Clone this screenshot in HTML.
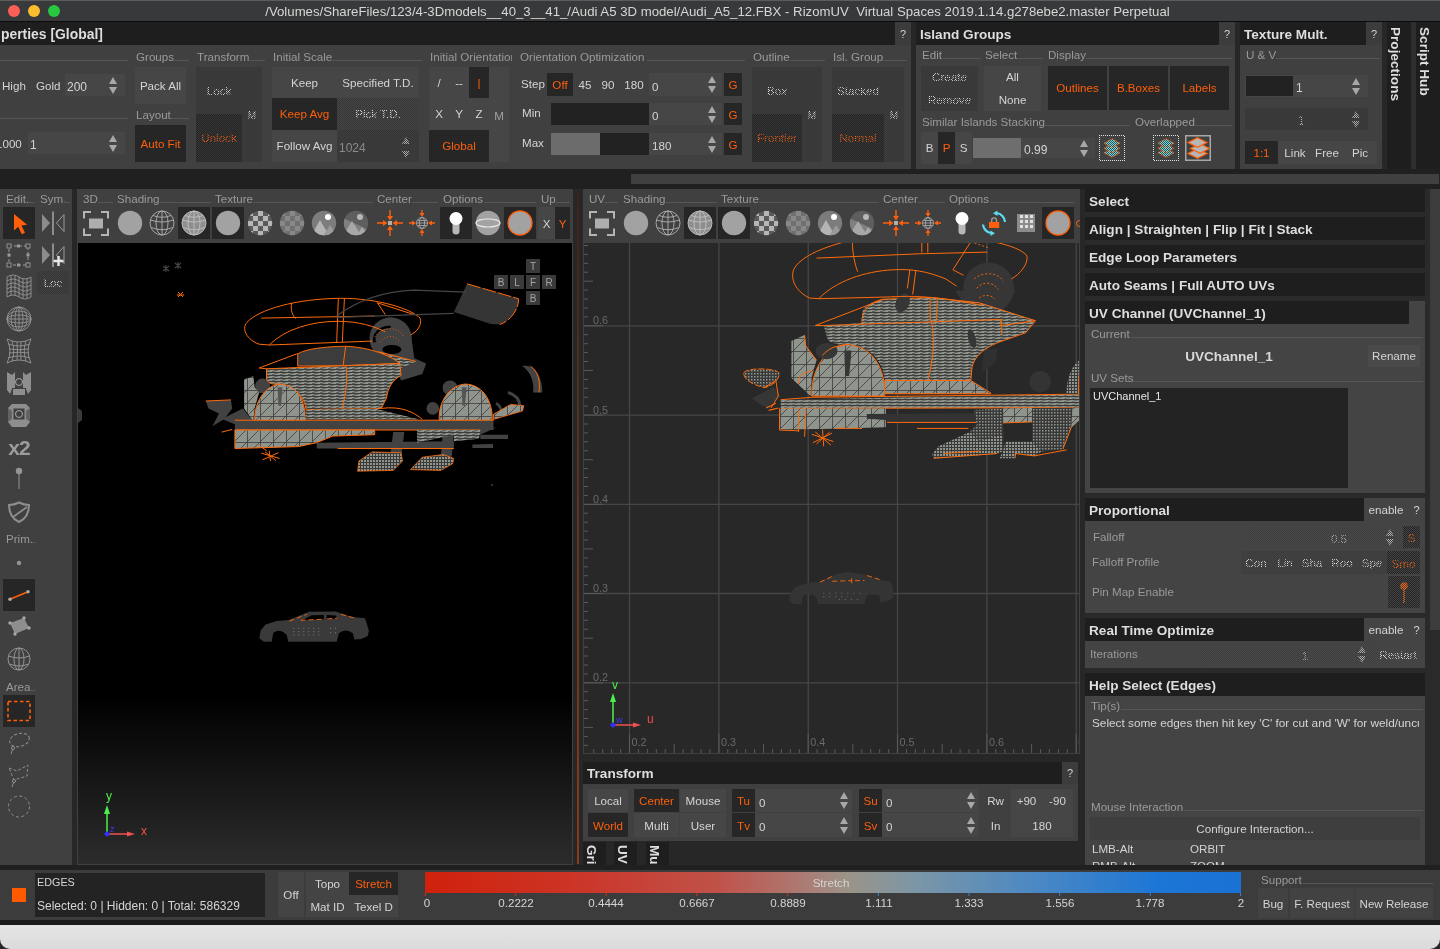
<!DOCTYPE html>
<html>
<head>
<meta charset="utf-8">
<title>RizomUV</title>
<style>
html,body{margin:0;padding:0;}
body{width:1440px;height:949px;overflow:hidden;background:#272727;position:relative;font-family:"Liberation Sans",sans-serif;font-size:11.6px;color:#d4d4d4;}
div,span{box-sizing:border-box;}
.a{position:absolute;}
.c{position:absolute;display:flex;align-items:center;justify-content:center;white-space:nowrap;}
.l{position:absolute;display:flex;align-items:center;justify-content:flex-start;white-space:nowrap;padding-bottom:2px;}
.body{background:#404040;}
.hdr{background:#1e1e1e;color:#dedede;font-weight:bold;font-size:13.6px;display:flex;align-items:center;white-space:nowrap;overflow:hidden;padding-top:1px;}
.q{background:#3c3c3c;color:#d0d0d0;font-size:11px;}
.b{background:#464646;color:#d4d4d4;}
.d{background:#262626;color:#ff5f0a;}
.o{color:#ff5f0a;}
.u{padding-bottom:2px;}
.l.b{padding-top:3px;padding-bottom:0;}
.g{color:#9a9a9a;}
.dis{color:#e4e4e4;-webkit-mask-image:conic-gradient(#000 25%,transparent 0 50%,#000 0 75%,transparent 0);-webkit-mask-size:2px 2px;mask-image:conic-gradient(#000 25%,transparent 0 50%,#000 0 75%,transparent 0);mask-size:2px 2px;}
.hat{background-color:#3d3d3d;background-image:conic-gradient(rgba(0,0,0,.12) 25%,transparent 0 50%,rgba(0,0,0,.12) 0 75%,transparent 0);background-size:2px 2px;}
.hatd{background-color:#242424;color:#ff5f0a;-webkit-mask-image:conic-gradient(#000 25%,transparent 0 50%,#000 0 75%,transparent 0);-webkit-mask-size:2px 2px;mask-image:conic-gradient(#000 25%,transparent 0 50%,#000 0 75%,transparent 0);mask-size:2px 2px;}
.ln{position:absolute;height:1px;background:#565656;}
.sp{position:absolute;width:9px;height:18px;}
.sp:before,.sp:after{content:"";position:absolute;left:0;border-left:4.5px solid transparent;border-right:4.5px solid transparent;}
.sp:before{top:1px;border-bottom:7.5px solid #a8a8a8;}
.sp:after{bottom:0;border-top:7.5px solid #a8a8a8;}
.sp.x{-webkit-mask-image:conic-gradient(#000 25%,transparent 0 50%,#000 0 75%,transparent 0);-webkit-mask-size:2px 2px;mask-image:conic-gradient(#000 25%,transparent 0 50%,#000 0 75%,transparent 0);mask-size:2px 2px;}
.sp.x:before{border-bottom-color:#b0b0b0;}
.sp.x:after{border-top-color:#b0b0b0;}
svg{position:absolute;overflow:visible;}
</style>
</head>
<body>
<div id="root" style="position:absolute;left:0;top:0;width:1440px;height:949px;will-change:transform;">

<!-- ===== title bar ===== -->
<div class="a" style="left:0;top:0;width:1440px;height:22px;background:#38393b;border-top:1px solid #5c5c5c;border-bottom:1px solid #0c0c0c;"></div>
<div class="a" style="left:8px;top:5px;width:12px;height:12px;border-radius:6px;background:#fc5f57;"></div>
<div class="a" style="left:28px;top:5px;width:12px;height:12px;border-radius:6px;background:#fdbc2e;"></div>
<div class="a" style="left:48px;top:5px;width:12px;height:12px;border-radius:6px;background:#28c840;"></div>
<div class="c" id="title" style="left:265px;top:0;width:905px;height:22px;font-size:13.2px;color:#d6d6d6;white-space:pre;">/Volumes/ShareFiles/123/4-3Dmodels__40_3__41_/Audi A5 3D model/Audi_A5_12.FBX - RizomUV  Virtual Spaces 2019.1.14.g278ebe2.master Perpetual</div>

<!-- ===== TOP LEFT PANEL : properties ===== -->
<div class="a hdr" style="left:0;top:22px;width:895px;height:23px;"><span style="margin-left:1px;font-size:13.9px;">perties [Global]</span></div>
<div class="c q" style="left:895px;top:22px;width:16px;height:23px;">?</div>
<div class="a body" style="left:0;top:45px;width:911px;height:124px;"></div>
<!-- left quality rows -->
<div class="ln" style="left:0;top:60px;width:128px;"></div>
<div class="l" style="left:2px;top:75px;height:23px;">High</div>
<div class="l" style="left:36px;top:75px;height:23px;">Gold</div>
<div class="l b" style="left:65px;top:74px;width:60px;height:22px;padding-left:2px;font-size:12px;">200</div>
<div class="sp" style="left:109px;top:76px;"></div>
<div class="ln" style="left:0;top:118px;width:128px;"></div>
<div class="l" style="left:-4px;top:133px;height:23px;">1000</div>
<div class="l b" style="left:28px;top:132px;width:97px;height:22px;padding-left:2px;font-size:12px;">1</div>
<div class="sp" style="left:109px;top:134px;"></div>
<!-- Groups / Layout -->
<div class="l g" style="left:136px;top:50px;height:14px;">Groups</div><div class="ln" style="left:174px;top:60px;width:15px;"></div>
<div class="c b" style="left:135px;top:67px;width:51px;height:37px;">Pack All</div>
<div class="l g" style="left:136px;top:108px;height:14px;">Layout</div><div class="ln" style="left:171px;top:118px;width:18px;"></div>
<div class="c d" style="left:135px;top:125px;width:51px;height:37px;">Auto Fit</div>
<!-- Transform -->
<div class="l g" style="left:197px;top:50px;height:14px;">Transform</div><div class="ln" style="left:250px;top:60px;width:15px;"></div>
<div class="a hat" style="left:196px;top:67px;width:66px;height:95px;"></div>
<div class="c dis u" style="left:196px;top:80px;width:46px;height:22px;">Lock</div>
<div class="c hatd u" style="left:196px;top:114px;width:46px;height:48px;">Unlock</div>
<div class="c dis" style="left:243px;top:108px;width:18px;height:14px;font-size:10px;">M</div>
<!-- Initial Scale -->
<div class="l g" style="left:273px;top:50px;height:14px;">Initial Scale</div><div class="ln" style="left:332px;top:60px;width:90px;"></div>
<div class="a b" style="left:272px;top:67px;width:147px;height:95px;"></div>
<div class="c" style="left:272px;top:67px;width:65px;height:31px;">Keep</div>
<div class="c" style="left:337px;top:67px;width:82px;height:31px;">Specified T.D.</div>
<div class="c d u" style="left:272px;top:98px;width:65px;height:32px;">Keep Avg</div>
<div class="c hat dis u" style="left:337px;top:98px;width:82px;height:32px;">Pick T.D.</div>
<div class="c u" style="left:272px;top:130px;width:65px;height:32px;">Follow Avg</div>
<div class="l hat" style="left:337px;top:130px;width:82px;height:32px;padding-left:2px;color:#8a8a8a;font-size:12px;padding-top:5px;">1024</div>
<div class="sp x" style="left:402px;top:136px;height:22px;"></div>
<!-- Initial Orientation -->
<div class="l g" style="left:430px;top:50px;height:14px;width:82px;overflow:hidden;">Initial Orientation</div>
<div class="a b" style="left:429px;top:67px;width:80px;height:95px;"></div>
<div class="c" style="left:429px;top:67px;width:20px;height:31px;">/</div>
<div class="c" style="left:449px;top:67px;width:20px;height:31px;">--</div>
<div class="c d" style="left:469px;top:67px;width:20px;height:31px;">|</div>
<div class="c u" style="left:429px;top:98px;width:20px;height:32px;">X</div>
<div class="c u" style="left:449px;top:98px;width:20px;height:32px;">Y</div>
<div class="c u" style="left:469px;top:98px;width:20px;height:32px;">Z</div>
<div class="c" style="left:489px;top:99px;width:20px;height:32px;color:#a0a0a0;">M</div>
<div class="c d u" style="left:429px;top:130px;width:60px;height:32px;">Global</div>
<!-- Orientation Optimization -->
<div class="l g" style="left:520px;top:50px;height:14px;">Orientation Optimization</div><div class="ln" style="left:647px;top:60px;width:98px;"></div>
<div class="l" style="left:521px;top:73px;height:23px;">Step</div>
<div class="c d" style="left:547px;top:73px;width:26px;height:23px;">Off</div>
<div class="c" style="left:574px;top:73px;width:22px;height:23px;">45</div>
<div class="c" style="left:597px;top:73px;width:22px;height:23px;">90</div>
<div class="c" style="left:620px;top:73px;width:28px;height:23px;">180</div>
<div class="l b" style="left:649px;top:73px;width:73px;height:23px;padding-left:3px;">0</div>
<div class="sp" style="left:708px;top:75px;"></div>
<div class="c d" style="left:724px;top:73px;width:18px;height:23px;">G</div>
<div class="l" style="left:522px;top:102px;height:23px;">Min</div>
<div class="a" style="left:551px;top:103px;width:98px;height:22px;background:#222;"></div>
<div class="l b" style="left:649px;top:103px;width:73px;height:22px;padding-left:3px;">0</div>
<div class="sp" style="left:708px;top:105px;"></div>
<div class="c d" style="left:724px;top:103px;width:18px;height:22px;">G</div>
<div class="l" style="left:522px;top:132px;height:23px;">Max</div>
<div class="a" style="left:551px;top:133px;width:98px;height:22px;background:#222;"></div>
<div class="a" style="left:551px;top:133px;width:49px;height:22px;background:#6c6c6c;"></div>
<div class="l b" style="left:649px;top:133px;width:73px;height:22px;padding-left:3px;">180</div>
<div class="sp" style="left:708px;top:135px;"></div>
<div class="c d" style="left:724px;top:133px;width:18px;height:22px;">G</div>
<!-- Outline -->
<div class="l g" style="left:753px;top:50px;height:14px;">Outline</div><div class="ln" style="left:790px;top:60px;width:35px;"></div>
<div class="a hat" style="left:752px;top:67px;width:70px;height:95px;"></div>
<div class="c dis u" style="left:752px;top:80px;width:50px;height:22px;">Box</div>
<div class="c hatd u" style="left:752px;top:114px;width:50px;height:48px;">Frontier</div>
<div class="c dis" style="left:803px;top:108px;width:18px;height:14px;font-size:10px;">M</div>
<!-- Isl group -->
<div class="l g" style="left:833px;top:50px;height:14px;">Isl. Group</div><div class="ln" style="left:883px;top:60px;width:24px;"></div>
<div class="a hat" style="left:832px;top:67px;width:72px;height:95px;"></div>
<div class="c dis u" style="left:832px;top:80px;width:52px;height:22px;">Stacked</div>
<div class="c hatd u" style="left:832px;top:114px;width:52px;height:48px;">Normal</div>
<div class="c dis" style="left:885px;top:108px;width:18px;height:14px;font-size:10px;">M</div>
<!-- bottom scrollbar -->
<div class="a" style="left:0;top:169px;width:1440px;height:20px;background:#202020;"></div>
<div class="a" style="left:631px;top:174px;width:808px;height:10px;background:#404040;"></div>
<!--TOPLEFT-->

<!-- ===== ISLAND GROUPS ===== -->
<div class="a hdr" style="left:916px;top:22px;width:303px;height:23px;padding-left:4px;">Island Groups</div>
<div class="c q" style="left:1219px;top:22px;width:16px;height:23px;">?</div>
<div class="a body" style="left:916px;top:45px;width:319px;height:124px;"></div>
<div class="l g" style="left:922px;top:48px;height:14px;">Edit</div><div class="ln" style="left:943px;top:58px;width:38px;"></div>
<div class="l g" style="left:985px;top:48px;height:14px;">Select</div><div class="ln" style="left:1018px;top:58px;width:25px;"></div>
<div class="l g" style="left:1048px;top:48px;height:14px;">Display</div><div class="ln" style="left:1086px;top:58px;width:146px;"></div>
<div class="a hat" style="left:921px;top:66px;width:57px;height:45px;"></div>
<div class="c dis u" style="left:921px;top:66px;width:57px;height:22px;">Create</div>
<div class="c dis u" style="left:921px;top:89px;width:57px;height:22px;">Remove</div>
<div class="a b" style="left:984px;top:66px;width:57px;height:45px;"></div>
<div class="c u" style="left:984px;top:66px;width:57px;height:22px;">All</div>
<div class="c u" style="left:984px;top:89px;width:57px;height:22px;">None</div>
<div class="c d u" style="left:1048px;top:66px;width:59px;height:44px;">Outlines</div>
<div class="c d u" style="left:1109px;top:66px;width:59px;height:44px;">B.Boxes</div>
<div class="c d u" style="left:1170px;top:66px;width:59px;height:44px;">Labels</div>
<div class="l g" style="left:922px;top:115px;height:14px;">Similar Islands Stacking</div><div class="ln" style="left:1045px;top:125px;width:85px;"></div>
<div class="l g" style="left:1135px;top:115px;height:14px;">Overlapped</div><div class="ln" style="left:1195px;top:125px;width:37px;"></div>
<div class="a b" style="left:921px;top:132px;width:51px;height:32px;"></div>
<div class="c u" style="left:921px;top:132px;width:17px;height:32px;">B</div>
<div class="c d u" style="left:938px;top:132px;width:17px;height:32px;">P</div>
<div class="c u" style="left:955px;top:132px;width:17px;height:32px;">S</div>
<div class="a" style="left:973px;top:138px;width:48px;height:20px;background:#6e6e6e;"></div>
<div class="l b" style="left:1021px;top:138px;width:74px;height:20px;padding-left:3px;font-size:12px;padding-top:4px;">0.99</div>
<div class="sp" style="left:1080px;top:139px;"></div>
<!-- stack icons -->
<svg width="0" height="0" style="left:0;top:0;"><defs><pattern id="ckc" width="2" height="2" patternUnits="userSpaceOnUse"><rect width="2" height="2" fill="#66e0ea"/><rect width="1" height="1" fill="#3a4a4c"/><rect x="1" y="1" width="1" height="1" fill="#3a4a4c"/></pattern></defs></svg>
<svg style="left:1099px;top:135px;" width="26" height="26" viewBox="0 0 26 26"><rect x=".5" y=".5" width="25" height="25" fill="none" stroke="#e0e0e0" stroke-width="1" stroke-dasharray="1 1" stroke-dashoffset=".5" shape-rendering="crispEdges"/><path d="M13 13.3 21 17.8 13 22.3 5 17.8Z" fill="url(#ckc)" stroke="#e8601a" stroke-width="1" stroke-dasharray="1.5 .8"/><path d="M13 8.8 21 13.3 13 17.8 5 13.3Z" fill="url(#ckc)" stroke="#e8601a" stroke-width="1" stroke-dasharray="1.5 .8"/><path d="M13 3.6999999999999993 21 8.2 13 12.7 5 8.2Z" fill="url(#ckc)" stroke="#e8601a" stroke-width="1" stroke-dasharray="1.5 .8"/></svg>
<svg style="left:1153px;top:135px;" width="26" height="26" viewBox="0 0 26 26"><rect x=".5" y=".5" width="25" height="25" fill="none" stroke="#e0e0e0" stroke-width="1" stroke-dasharray="1 1" stroke-dashoffset=".5" shape-rendering="crispEdges"/><path d="M13 13.3 21 17.8 13 22.3 5 17.8Z" fill="url(#ckc)" stroke="#e8601a" stroke-width="1" stroke-dasharray="1.5 .8"/><path d="M13 8.8 21 13.3 13 17.8 5 13.3Z" fill="url(#ckc)" stroke="#e8601a" stroke-width="1" stroke-dasharray="1.5 .8"/><path d="M13 3.6999999999999993 21 8.2 13 12.7 5 8.2Z" fill="url(#ckc)" stroke="#e8601a" stroke-width="1" stroke-dasharray="1.5 .8"/></svg>
<svg style="left:1185px;top:135px;" width="26" height="26" viewBox="0 0 26 26"><rect x=".75" y=".75" width="24.500" height="24.500" fill="none" stroke="#a8a8a8" stroke-width="1.500"/><path d="M12.5 13.7 22.0 18.5 12.5 23.3 3.0 18.5Z" fill="#b6b6b6" stroke="#ff5f0a" stroke-width="1.200"/><path d="M15 8.7 24.5 13.5 15 18.3 5.5 13.5Z" fill="#b6b6b6" stroke="#ff5f0a" stroke-width="1.200"/><path d="M12.5 2.7 22.0 7.5 12.5 12.3 3.0 7.5Z" fill="#b6b6b6" stroke="#ff5f0a" stroke-width="1.200"/></svg>
<!--ISLAND-->

<!-- ===== TEXTURE MULT ===== -->
<div class="a hdr" style="left:1240px;top:22px;width:126px;height:23px;padding-left:4px;">Texture Mult.</div>
<div class="c q" style="left:1366px;top:22px;width:16px;height:23px;">?</div>
<div class="a body" style="left:1240px;top:45px;width:142px;height:124px;"></div>
<div class="l g" style="left:1246px;top:48px;height:14px;">U &amp; V</div><div class="ln" style="left:1276px;top:58px;width:104px;"></div>
<div class="a b" style="left:1245px;top:75px;width:123px;height:22px;"></div>
<div class="a" style="left:1246px;top:76px;width:47px;height:20px;background:#222;"></div>
<div class="l" style="left:1296px;top:78px;height:22px;font-size:12px;">1</div>
<div class="sp" style="left:1352px;top:77px;"></div>
<div class="a hat" style="left:1245px;top:108px;width:123px;height:22px;"></div>
<div class="l dis" style="left:1298px;top:111px;height:22px;font-size:12px;color:#b4b4b4;">1</div>
<div class="sp x" style="left:1352px;top:110px;"></div>
<div class="a b" style="left:1245px;top:141px;width:132px;height:23px;"></div>
<div class="c d" style="left:1245px;top:141px;width:33px;height:23px;">1:1</div>
<div class="c" style="left:1278px;top:141px;width:34px;height:23px;">Link</div>
<div class="c" style="left:1311px;top:141px;width:32px;height:23px;">Free</div>
<div class="c" style="left:1343px;top:141px;width:34px;height:23px;">Pic</div>
<!-- vertical tabs -->
<div class="a" style="left:1411px;top:22px;width:5px;height:147px;background:#2e2e2e;"></div>
<div class="a" style="left:1387px;top:22px;width:24px;height:147px;background:#1e1e1e;"></div>
<div class="a" style="left:1416px;top:22px;width:24px;height:147px;background:#1e1e1e;"></div>
<div class="a" style="left:1407px;top:27px;width:0;height:0;"><div style="position:absolute;left:0;top:0;transform-origin:0 0;transform:rotate(90deg);font-weight:bold;font-size:13.6px;white-space:nowrap;line-height:24px;height:24px;color:#dedede;">Projections</div></div>
<div class="a" style="left:1436px;top:27px;width:0;height:0;"><div style="position:absolute;left:0;top:0;transform-origin:0 0;transform:rotate(90deg);font-weight:bold;font-size:13.6px;white-space:nowrap;line-height:24px;height:24px;color:#dedede;">Script Hub</div></div>
<!--TEXMULT-->

<!-- ===== LEFT TOOLBAR ===== -->
<div class="a body" style="left:0;top:189px;width:72px;height:676px;"></div>
<div class="l g" style="left:6px;top:192px;height:14px;">Edit.</div><div class="ln" style="left:28px;top:202px;width:6px;"></div>
<div class="l g" style="left:40px;top:192px;height:14px;">Sym.</div><div class="ln" style="left:64px;top:202px;width:6px;"></div>
<div class="a" style="left:3px;top:207px;width:32px;height:32px;background:#262626;"></div>
<div class="a" style="left:3px;top:579px;width:32px;height:32px;background:#262626;"></div>
<div class="a" style="left:3px;top:695px;width:32px;height:32px;background:#262626;"></div>
<div class="c hat dis" style="left:37px;top:271px;width:32px;height:23px;">Loc</div>
<div class="c" style="left:3px;top:434px;width:32px;height:28px;font-weight:bold;font-size:21px;color:#9c9c9c;letter-spacing:-1px;">x2</div>
<div class="l g" style="left:6px;top:532px;height:14px;">Prim.</div><div class="ln" style="left:32px;top:542px;width:4px;"></div>
<div class="l g" style="left:6px;top:680px;height:14px;">Area</div><div class="ln" style="left:31px;top:690px;width:5px;"></div>
<svg style="left:0;top:189px;" width="72" height="676" viewBox="0 189 72 676">
<!-- select arrow -->
<path d="M14 214V230.500L18.200 226.800 21.800 234.200 25 232.700 21.400 225.400 27.200 224.800Z" fill="#ff5f0a"/>
<!-- symmetry 1 -->
<path d="M42 214 50 223 42 232Z" fill="#8c8c8c"/><path d="M53 211.500V235" stroke="#a0a0a0" stroke-width="1.600"/><path d="M64 214.500 56.500 223 64 231.500Z" fill="none" stroke="#9a9a9a" stroke-width="1"/>
<!-- symmetry 2 -->
<path d="M42 246 50 255 42 264Z" fill="#8c8c8c"/><path d="M53 243.500V267" stroke="#a0a0a0" stroke-width="1.600"/><path d="M64 246.500 56.500 255 64 263.500Z" fill="none" stroke="#9a9a9a" stroke-width="1"/><path d="M58.500 256V266M53.500 261H63.500" stroke="#e8e8e8" stroke-width="2.400"/>
<!-- box select -->
<rect x="9" y="246" width="19" height="19" fill="none" stroke="#9a9a9a" stroke-width="1" stroke-dasharray="3 2"/><g fill="#3c3c3c" stroke="#9a9a9a" stroke-width=".9"><rect x="7" y="244" width="4" height="4"/><rect x="26" y="244" width="4" height="4"/><rect x="7" y="263" width="4" height="4"/><rect x="26" y="263" width="4" height="4"/></g><g fill="#9a9a9a"><rect x="17" y="244.500" width="3" height="3"/><rect x="17" y="263.500" width="3" height="3"/><rect x="7.500" y="253.500" width="3" height="3"/><rect x="26.500" y="253.500" width="3" height="3"/></g>
<!-- wave grid -->
<g fill="none" stroke="#949494" stroke-width=".9"><path d="M7 277Q13 273 19 277T31 277M7 281Q13 277 19 281T31 281M7 285Q13 281 19 285T31 285M7 289Q13 285 19 289T31 289M7 293Q13 289 19 293T31 293M7 297Q13 293 19 297T31 297M7 277V297M11 275.500V295.500M15 275.500V295.500M19 277V297M23 278.500V298.500M27 278.500V298.500M31 277V297"/></g>
<!-- sphere grid -->
<g fill="none" stroke="#949494" stroke-width=".9"><circle cx="19" cy="319" r="12"/><ellipse cx="19" cy="319" rx="8" ry="12"/><ellipse cx="19" cy="319" rx="4" ry="12"/><ellipse cx="19" cy="319" rx="12" ry="8"/><ellipse cx="19" cy="319" rx="12" ry="4"/><path d="M19 307V331M7 319H31"/></g>
<!-- pinch grid -->
<g fill="none" stroke="#949494" stroke-width=".9"><path d="M7 339Q19 345 31 339M8 344Q19 348 30 344M9 349Q19 350.500 29 349M9 353Q19 351.500 29 353M8 358Q19 354 30 358M7 363Q19 357 31 363M7 339Q13 351 7 363M12 341Q15.500 351 12 361M17 342Q17.800 351 17 360M21 342Q20.200 351 21 360M26 341Q22.500 351 26 361M31 339Q25 351 31 363"/></g>
<!-- unfold -->
<g fill="#8e8e8e"><path d="M7 372 12 375V389L10 394 7 390ZM31 372 26 375V389L28 394 31 390ZM13 389H25V395H13Z"/><path d="M13 376h12v11h-12z" fill="none"/></g><circle cx="19" cy="382" r="3.500" fill="none" stroke="#a8a8a8" stroke-width="1"/><path d="M12 375 15 372V388H12ZM26 375 23 372V388H26Z" fill="#8e8e8e"/>
<!-- optimize -->
<g fill="#8e8e8e"><path d="M12 404H26L30 408V422L26 427H12L8 422V408Z"/></g><rect x="13.500" y="408.500" width="11" height="11" fill="#404040"/><circle cx="19" cy="414" r="3.500" fill="none" stroke="#a8a8a8" stroke-width="1"/><path d="M8 408 12 411V419L8 422ZM30 408 26 411V419L30 422Z" fill="#404040" opacity=".55"/>
<!-- pin -->
<circle cx="19" cy="471" r="3.200" fill="#949494"/><path d="M19 474V489" stroke="#949494" stroke-width="1"/>
<!-- shield -->
<path d="M19 502.500C22 504 26 505 29 505C29 513 25.500 519 19 522C12.500 519 9 513 9 505C12 505 16 504 19 502.500Z" fill="none" stroke="#8e8e8e" stroke-width="2"/><path d="M27 507 13 517" stroke="#8e8e8e" stroke-width="1.600"/>
<!-- dot -->
<circle cx="19" cy="563" r="2.200" fill="#949494"/>
<!-- edge -->
<path d="M10.500 599 27.500 592" stroke="#ff5f0a" stroke-width="1.800"/><circle cx="10" cy="599.200" r="1.800" fill="#aaa"/><circle cx="28" cy="591.800" r="1.800" fill="#aaa"/>
<!-- polygon -->
<path d="M10 623 24 618 29 628 15 634Z" fill="#8e8e8e"/><g fill="#a8a8a8"><circle cx="10" cy="623" r="1.700"/><circle cx="24" cy="618" r="1.700"/><circle cx="29" cy="628" r="1.700"/><circle cx="15" cy="634" r="1.700"/></g>
<!-- globe -->
<g fill="none" stroke="#949494" stroke-width="1"><circle cx="19" cy="659" r="11"/><ellipse cx="19" cy="659" rx="5" ry="11"/><path d="M19 648V670M8.500 656Q19 660 29.500 656M9.500 664Q19 668 28.500 664"/></g>
<!-- area rect -->
<rect x="8" y="701.500" width="22" height="19" fill="none" stroke="#ff5f0a" stroke-width="1.600" stroke-dasharray="3.500 2.500"/>
<!-- lasso -->
<ellipse cx="19.500" cy="740" rx="10" ry="6.500" fill="none" stroke="#8e8e8e" stroke-width="1" stroke-dasharray="3 2" transform="rotate(-15 19.500 740)"/><circle cx="13" cy="748" r="1.600" fill="none" stroke="#8e8e8e"/><path d="M12.500 749.500 11 754" stroke="#8e8e8e"/>
<!-- poly lasso -->
<path d="M9 768 17 771 28 765 27 776 14 780Z" fill="none" stroke="#8e8e8e" stroke-width="1" stroke-dasharray="3 2"/><circle cx="14" cy="781" r="1.600" fill="none" stroke="#8e8e8e"/><path d="M13.500 782.500 12 787" stroke="#8e8e8e"/>
<!-- circle -->
<circle cx="19" cy="806.500" r="10.500" fill="none" stroke="#8e8e8e" stroke-width="1" stroke-dasharray="3 2.500"/>
</svg>
<!--LEFTBAR-->

<!--VIEW3D-BEGIN-->
<svg width="0" height="0" style="left:0;top:0;"><defs>
<pattern id="mS" width="13" height="13" patternUnits="userSpaceOnUse"><rect width="13" height="13" fill="#8f958c"/><path d="M0 .5H13M.5 0V13M0 13 13 0" stroke="#3c3c3c" stroke-width=".8" fill="none"/></pattern>
<pattern id="mD" width="8" height="3" patternUnits="userSpaceOnUse"><rect width="8" height="3" fill="#8f958c"/><path d="M0 .5H8" stroke="#333" stroke-width=".9" fill="none"/><path d="M0 3 8 0" stroke="#333" stroke-width=".7" fill="none"/></pattern>
<pattern id="mX" width="3" height="3" patternUnits="userSpaceOnUse"><rect width="3" height="3" fill="#3a3a3a"/><rect x="1" y="1" width="2" height="2" fill="#8f958c"/></pattern>
<pattern id="mXX" width="3" height="3" patternUnits="userSpaceOnUse"><rect width="3" height="3" fill="#383838"/><rect x="1" y="1" width="1.500" height="1.500" fill="#8f958c"/></pattern>
<pattern id="mH" width="8" height="3" patternUnits="userSpaceOnUse"><rect width="8" height="3" fill="#8f958c"/><path d="M0 .5H8" stroke="#3a3a3a" stroke-width="1.100"/><path d="M0 3 8 0" stroke="#3a3a3a" stroke-width=".5"/></pattern>
</defs></svg>
<!-- ===== 3D VIEW ===== -->
<div class="a body" style="left:77px;top:189px;width:496px;height:676px;"></div>
<div class="a" style="left:78px;top:243px;width:494px;height:621px;background:linear-gradient(#000 0,#000 73%,#2c2c2c 100%);"></div>
<div class="l g" style="left:83px;top:192px;height:14px;">3D</div><div class="ln" style="left:98px;top:202px;width:15px;"></div>
<div class="l g" style="left:117px;top:192px;height:14px;">Shading</div><div class="ln" style="left:160px;top:202px;width:51px;"></div>
<div class="l g" style="left:215px;top:192px;height:14px;">Texture</div><div class="ln" style="left:253px;top:202px;width:120px;"></div>
<div class="l g" style="left:377px;top:192px;height:14px;">Center</div><div class="ln" style="left:412px;top:202px;width:26px;"></div>
<div class="l g" style="left:443px;top:192px;height:14px;">Options</div><div class="ln" style="left:484px;top:202px;width:52px;"></div>
<div class="l g" style="left:541px;top:192px;height:14px;">Up</div><div class="ln" style="left:556px;top:202px;width:14px;"></div>
<svg style="left:83px;top:210px;" width="26" height="26" viewBox="0 0 26 26"><path d="M1 8.500V2H8M18 2H25V8.500M25 18.500V25H18M8 25H1V18.500" fill="none" stroke="#b4b4b4" stroke-width="2"/><rect x="6" y="8.500" width="14" height="10" fill="#aeaeae"/></svg>
<svg style="left:117px;top:210px;" width="26" height="26" viewBox="0 0 26 26"><circle cx="13" cy="13" r="12.2" fill="#a2a2a2"/></svg>
<svg style="left:149px;top:210px;" width="26" height="26" viewBox="0 0 26 26"><g fill="none" stroke="#b0b0b0" stroke-width=".9"><circle cx="13" cy="13" r="12"/><ellipse cx="13" cy="13" rx="6" ry="12"/><path d="M13 1V25M1.500 10Q13 14 24.500 10M2.500 17.500Q13 22 23.500 17.500M4 5.500Q13 9 22 5.500"/></g></svg>
<div class="a" style="left:178px;top:207px;width:32px;height:32px;background:#262626;"></div>
<svg style="left:181px;top:210px;" width="26" height="26" viewBox="0 0 26 26"><circle cx="13" cy="13" r="12" fill="#8e8e8e"/><g fill="none" stroke="#c0c0c0" stroke-width=".9"><circle cx="13" cy="13" r="12"/><ellipse cx="13" cy="13" rx="6" ry="12"/><path d="M13 1V25M1.500 10Q13 14 24.500 10M2.500 17.500Q13 22 23.500 17.500M4 5.500Q13 9 22 5.500"/></g></svg>
<div class="a" style="left:212px;top:207px;width:32px;height:32px;background:#262626;"></div>
<svg style="left:215px;top:210px;" width="26" height="26" viewBox="0 0 26 26"><circle cx="13" cy="13" r="12.2" fill="#a2a2a2"/></svg>
<svg style="left:247px;top:210px;" width="26" height="26" viewBox="0 0 26 26"><clipPath id="cka"><circle cx="13" cy="13" r="12.2"/></clipPath><g clip-path="url(#cka)"><rect width="26" height="26" fill="#5a5a5a"/><path d="M1 1h5v5h-5zM11 1h5v5h-5zM21 1h5v5h-5zM6 6h5v5h-5zM16 6h5v5h-5zM1 11h5v5h-5zM11 11h5v5h-5zM21 11h5v5h-5zM6 16h5v5h-5zM16 16h5v5h-5zM1 21h5v5h-5zM11 21h5v5h-5zM21 21h5v5h-5z" fill="#b6b6b6"/></g></svg>
<svg style="left:279px;top:210px;" width="26" height="26" viewBox="0 0 26 26"><clipPath id="cda"><circle cx="13" cy="13" r="12.2"/></clipPath><g clip-path="url(#cda)"><rect width="26" height="26" fill="#707070"/><path d="M1 1h5v5h-5zM11 1h5v5h-5zM21 1h5v5h-5zM6 6h5v5h-5zM16 6h5v5h-5zM1 11h5v5h-5zM11 11h5v5h-5zM21 11h5v5h-5zM6 16h5v5h-5zM16 16h5v5h-5zM1 21h5v5h-5zM11 21h5v5h-5zM21 21h5v5h-5z" fill="#888"/></g></svg>
<svg style="left:311px;top:210px;" width="26" height="26" viewBox="0 0 26 26"><clipPath id="m1a"><circle cx="13" cy="13" r="12.2"/></clipPath><g clip-path="url(#m1a)"><rect width="26" height="26" fill="#7c7c7c"/><path d="M0 26 9 10 16 22 19 17 26 26Z" fill="#b4b4b4"/><path d="M12 26 19 15 27 26Z" fill="#9a9a9a"/><circle cx="17" cy="7" r="3" fill="#fff"/></g></svg>
<svg style="left:343px;top:210px;" width="26" height="26" viewBox="0 0 26 26"><clipPath id="m2a"><circle cx="13" cy="13" r="12.2"/></clipPath><g clip-path="url(#m2a)"><rect width="26" height="26" fill="#5e5e5e"/><path d="M0 8 26 20V26H0Z" fill="#808080"/><path d="M0 26 9 11 16 22 19 17 26 26Z" fill="#a8a8a8"/><circle cx="17" cy="7" r="3" fill="#b8b8b8"/></g></svg>
<svg style="left:377px;top:210px;" width="26" height="26" viewBox="0 0 26 26"><g stroke="#ff5f0a" stroke-width="1.4" fill="#ff5f0a"><path d="M13 0V9M13 26V17M0 13H9M26 13H17" fill="none"/><path d="M13 10.500 10 6H16ZM13 15.500 10 20H16ZM10.500 13 6 10V16ZM15.500 13 20 10V16Z" stroke="none"/></g><rect x="11" y="11" width="4" height="4" fill="#b0b0b0"/></svg>
<svg style="left:409px;top:210px;" width="26" height="26" viewBox="0 0 26 26"><g stroke="#ff5f0a" stroke-width="1.3" fill="#ff5f0a"><path d="M13 0V5M13 26V21M0 13H5M26 13H21" fill="none"/><path d="M13 7 10.500 3H15.500ZM13 19 10.500 23H15.500ZM7 13 3 10.500V15.500ZM19 13 23 10.500V15.500Z" stroke="none"/></g><g fill="none" stroke="#b0b0b0" stroke-width=".8"><circle cx="13" cy="13" r="5.500"/><ellipse cx="13" cy="13" rx="2.600" ry="5.500"/><path d="M7.500 13H18.500M8.500 10.500H17.500M8.500 15.500H17.500"/></g></svg>
<div class="a" style="left:440px;top:207px;width:32px;height:32px;background:#262626;"></div>
<svg style="left:443px;top:210px;" width="26" height="26" viewBox="0 0 26 26"><path d="M9.500 12h7v9a3.500 3.500 0 0 1-7 0z" fill="#b8b8b8"/><circle cx="13" cy="8.500" r="6.500" fill="#fff"/><circle cx="15.500" cy="11" r="4" fill="#c4c4c4" opacity=".0"/></svg>
<svg style="left:475px;top:210px;" width="26" height="26" viewBox="0 0 26 26"><circle cx="13" cy="13" r="12.200" fill="#a2a2a2"/><ellipse cx="13" cy="13" rx="12" ry="4" fill="none" stroke="#e8e8e8" stroke-width="1.200"/></svg>
<div class="a" style="left:504px;top:207px;width:32px;height:32px;background:#262626;"></div>
<svg style="left:507px;top:210px;" width="26" height="26" viewBox="0 0 26 26"><circle cx="13" cy="13" r="12" fill="#a2a2a2" stroke="#ff5f0a" stroke-width="1.300"/></svg>
<div class="c b" style="left:538px;top:207px;width:17px;height:32px;">X</div><div class="c d" style="left:555px;top:207px;width:15px;height:32px;">Y</div>
<div class="c" style="left:526px;top:259px;width:14px;height:14px;background:#3a3a3a;color:#a4a4a4;font-size:10px;">T</div><div class="c" style="left:494px;top:275px;width:14px;height:14px;background:#3a3a3a;color:#a4a4a4;font-size:10px;">B</div><div class="c" style="left:510px;top:275px;width:14px;height:14px;background:#3a3a3a;color:#a4a4a4;font-size:10px;">L</div><div class="c" style="left:526px;top:275px;width:14px;height:14px;background:#3a3a3a;color:#a4a4a4;font-size:10px;">F</div><div class="c" style="left:542px;top:275px;width:14px;height:14px;background:#3a3a3a;color:#a4a4a4;font-size:10px;">R</div><div class="c" style="left:526px;top:291px;width:14px;height:14px;background:#3a3a3a;color:#a4a4a4;font-size:10px;">B</div>
<svg style="left:0;top:0;" width="1440" height="949" viewBox="0 0 1440 949">
<path d="M467.1 283.8L518.6 298.8C518.6 310.7 509.3 321.3 500.1 324.4L490.9 323.9L453.9 312Z" fill="#353535" stroke="none" stroke-width="1" />
<circle cx="390.6" cy="338.4" r="21.1" fill="#424242"/>
<path d="M372.1 350.3L411.7 339.7L414.3 358.2L426.2 363.5L422.3 374L401.1 380.6L393.2 363.5Z" fill="#424242" stroke="none" stroke-width="1" />
<ellipse cx="391.9" cy="349.5" rx="9.5" ry="4.5" fill="#000"/>
<path d="M205.8 401L230.9 399.9L232.2 408.4L224.3 418.9L212.4 426.3L219 413.6L208.5 408.4Z" fill="#424242" stroke="none" stroke-width="1" />
<path d="M221.7 418.9L242.8 408.4L253.3 421.5L234.9 424.2Z" fill="#424242" stroke="none" stroke-width="1" />
<circle cx="262.6" cy="385.9" r="7.4" fill="#424242"/>
<circle cx="432.8" cy="408.4" r="6.3" fill="#424242"/>
<circle cx="450.0" cy="387.8" r="7.4" fill="#424242"/>
<path d="M522 366.1C533.1 363.5 542.3 374 542.3 392.5L533.1 392.5C534.4 382 530.5 371.4 522 366.1Z" fill="#424242" stroke="none" stroke-width="1" />
<path d="M508 392.5C515.2 394.6 519.4 399.1 519.9 406.2" fill="none" stroke="#424242" stroke-width="3" />
<path d="M496.1 403.1C500.1 405.7 501.4 408.4 500.9 411.5" fill="none" stroke="#424242" stroke-width="2.5" />
<path d="M480.3 434.7L508 434.7L508 439L480.3 439ZM472.4 444.5L493 444L493 447.9L472.4 447.9ZM453.9 432.1L496.1 427.4L480.3 434.7L453.9 441.3Z" fill="#424242" stroke="none" stroke-width="1" />
<path d="M393.2 432.1L404.3 432.1L401.7 453.7L390.6 453.7ZM442.8 432.1L453.9 432.1L451.8 456.4L440.7 459Z" fill="#424242" stroke="none" stroke-width="1" />
<path d="M377.9 351.6L415.7 361.4L401.1 368L398.5 363.5Z" fill="url(#mD)" stroke="none" stroke-width="1" />
<path d="M377.9 351.6L415.7 361.4" fill="none" stroke="#ff6a0a" stroke-width="1" />
<path d="M374.7 342.4C372.1 334.5 380 326.5 390.6 327.1" fill="none" stroke="#000" stroke-width="2.5" />
<path d="M297.7 354.2C303.5 349 327.2 346.3 345.7 346.3C369.5 347.1 390.6 355.6 399.8 363.5L345.7 365.6L297.7 366.1Z" fill="#3c3c3c" stroke="#ff6a0a" stroke-width="1" />
<path d="M266.5 368.8L399.8 363.5L401.1 375.4C393.2 379.3 387.9 387.2 386.6 397.8L381.3 408.4L306.1 409.7C304.8 397.8 295.6 387.2 279.7 384.1C274.5 384.1 269.2 385.1 266.5 379.3Z" fill="url(#mD)" stroke="#ff6a0a" stroke-width="1" />
<path d="M244.1 379.3L253.3 376.2L254.7 387.2L259.1 392.5L254.7 408.4L253.3 421.5L244.1 408.4Z" fill="url(#mS)" stroke="none" stroke-width="1" />
<path d="M254.7 422.9C253.3 397.8 269.2 384.6 279.7 384.1C295.6 384.6 306.1 397.8 305.3 422.9Z" fill="url(#mS)" stroke="#ff6a0a" stroke-width="1" />
<path d="M439.4 422.9C436.8 397.8 453.9 384.1 465.8 384.1C480.3 384.6 493.5 397.8 492.2 422.9Z" fill="url(#mS)" stroke="#ff6a0a" stroke-width="1" />
<path d="M277.6 387.2L282.4 387.2L281.1 405.7L278.4 405.7ZM461.8 387.2L466.6 387.2L465 405.7L462.4 405.7Z" fill="#555" stroke="none" stroke-width="1" />
<path d="M305.3 409.7L374.7 408.4L419.6 419.4L305.3 419.4Z" fill="url(#mD)" stroke="none" stroke-width="1" />
<path d="M381.3 408.4C401.1 405.7 414.3 412.3 422.3 419.4" fill="none" stroke="#ff6a0a" stroke-width="1" />
<path d="M234.9 420.2L493.5 420.2L493.5 430L234.9 430Z" fill="#424242" stroke="none" stroke-width="1" />
<path d="M234.9 420.2L493.5 420.2M234.9 430L480.3 430" fill="none" stroke="#ff6a0a" stroke-width="1" />
<path d="M234.9 430L374.7 430L374.7 434.7L332.5 436.1L316.7 442.7L298.2 446.6L234.9 448.5Z" fill="url(#mS)" stroke="#ff6a0a" stroke-width="1" />
<path d="M316.7 442.7L453.9 441.3L453.9 448.5L316.7 448.5Z" fill="#424242" stroke="none" stroke-width="1" />
<path d="M337.8 448.5L453.9 448.5" fill="none" stroke="#ff6a0a" stroke-width="1" />
<path d="M417 430L480.3 430L479 438.7L453.9 441.3L453.9 434.7L417 442.7Z" fill="url(#mD)" stroke="none" stroke-width="1" />
<path d="M493.5 414.2L510.7 404.4L523.9 405.7L522.5 411L493.5 419.4Z" fill="url(#mS)" stroke="#ff6a0a" stroke-width="0.8" />
<path d="M358.9 461.1L372.1 451.9L401.1 452.7L402.5 461.1L393.2 470.4L357.6 471.2Z" fill="url(#mX)" stroke="#ff6a0a" stroke-width="0.8" />
<path d="M410.4 469.6L422.3 457.2L443.4 454.5L453.9 458.5L452.6 463.8L440.7 470.4Z" fill="url(#mX)" stroke="#ff6a0a" stroke-width="0.8" />
<path d="M259.1 344.2C246.7 339.7 241.5 329.2 246.7 322.6C258.6 309.4 295.6 298.8 340.4 298.3C380 298.3 411.7 309.4 420.1 318.1C422.3 325.2 417 331.8 410.4 335" fill="none" stroke="#ff6a0a" stroke-width="1" />
<path d="M269.2 345C285 329.2 311.4 321.3 337.8 321.3C358.9 321.3 374.7 326.5 385.3 331.8" fill="none" stroke="#ff6a0a" stroke-width="1" />
<path d="M259.1 344.2L269.2 345L372.1 341.1M261.3 318.1L374.7 316M338.3 298.8L336.7 342.9M344.4 298.8L342.3 342.4M291.6 302.8C290.3 310.7 292.9 316 295.6 318.6M377.4 302.8L414.3 314.7M377.4 302.8L385.3 314.7M259.1 368L297.7 353.5M259.1 368L266.5 368.8M345.7 346.3L343.1 365.6M345.7 366.1C348.4 376.7 345.7 392.5 342.5 408.4" fill="none" stroke="#ff6a0a" stroke-width="1" />
<path d="M336.5 316C361.5 297.5 390.6 290.9 414.3 290.1L465.8 292.2M336.5 317.3L453.9 313.3" fill="none" stroke="#454545" stroke-width="1.3" />
<path d="M467.1 283.8L518.6 298.8C518.6 310.7 509.3 321.3 500.1 324.4" fill="none" stroke="#ff6a0a" stroke-width="1" stroke-dasharray="14 2"/>
<path d="M374.7 337.1C380 326.5 398.5 325.2 403.8 337.1M380 342.4C385.3 334.5 395.9 334.5 399.8 342.4" fill="none" stroke="#ff6a0a" stroke-width="0.8" stroke-dasharray="1 2"/>
<path d="M530.5 366.1C538.4 371.4 540.5 382 538.9 392.5" fill="none" stroke="#ff6a0a" stroke-width="1" />
<path d="M261.3 453.2L279.7 458.5M262.6 459.8L278.4 452.7M269.2 450.6L270.5 461.1M265.2 451.9L275.8 460.6M259.1 445.3L266.5 450.6" fill="none" stroke="#ff6a0a" stroke-width="1" />
<path d="M205.8 401L230.9 399.9M221.7 432.1L232.2 429.5" fill="none" stroke="#ff6a0a" stroke-width="1" />
<path d="M259.4 638.3L260.6 630.6L265.6 624.4L276.7 621.1L288.9 620L308.9 611.7L335.6 611.4L351.1 616.7L365 618.3L368.9 630.6L367.8 636.1L361.1 638.9L354.4 639.4L352.8 633.3Q345.6 627.8 338.9 633.3L336.7 641.7L288.3 641.7L286.7 635Q280 627.8 273.3 632.8L271.7 641.7L263.9 641.7Z" fill="#3a3a3a" stroke="none" stroke-width="1" />
<path d="M302.2 620.3L311.7 615.2L323.9 615L323.9 619.2ZM326.7 615L335.6 615.6L337.8 618.6L326.7 619.2Z" fill="#000" stroke="none" stroke-width="1" />
<path d="M289.4 621.1L306.7 614.4M300.6 620.3L323.3 619.2M327.2 618.9L337.8 618.1M341.1 614.4L355.6 618.3" fill="none" stroke="#ff6a0a" stroke-width="0.9" stroke-dasharray="5 3"/>
<path d="M293.3 628.3H322.2M293.3 631.7H322.2M293.3 635H322.2M330 628.3H336.7M330 632.8H336.7" fill="none" stroke="#9a9f95" stroke-width="0.7" stroke-dasharray="1 4"/>
<path d="M163 266l6 5M169 266l-6 5M166 265v7M175 263l6 5M181 263l-6 5M178 262v7" stroke="#444" stroke-width="1.200"/><path d="M178 292l5 5M183 292l-5 5M177 295h7" stroke="#ff6a0a" stroke-width="1"/><path d="M78 408l4 3v9l-4 3z" fill="#3a3a3a"/><circle cx="492" cy="485" r=".8" fill="#666"/>
<path d="M107 834V812" stroke="#4cf04c" stroke-width="1.500"/><path d="M107 805l-3 9h6z" fill="#4cf04c"/><path d="M107 834H128" stroke="#f05050" stroke-width="1.500"/><path d="M135 834l-8-2.500v5z" fill="#f05050"/><path d="M107 831l3 3-3 3-3-3z" fill="#3030ff"/>
<text x="106" y="800" font-size="12" fill="#4cf04c" font-family="Liberation Sans,sans-serif">y</text><text x="141" y="835" font-size="12" fill="#f05050" font-family="Liberation Sans,sans-serif">x</text><text x="110" y="832" font-size="9" fill="#3a3aff" font-family="Liberation Sans,sans-serif">z</text>
</svg>
<!--VIEW3D-->

<!--VIEWUV-BEGIN-->
<!-- ===== UV VIEW ===== -->
<div class="a" style="left:577px;top:192px;width:2px;height:672px;background:linear-gradient(#3c2418,#52301e 30%,#8a3a18 100%);"></div>
<div class="a body" style="left:583px;top:189px;width:497px;height:565px;"></div>
<div class="a" style="left:584px;top:243px;width:495px;height:510px;background:#282828;overflow:hidden;" id="uvvp"></div>
<div class="l g" style="left:589px;top:192px;height:14px;">UV</div><div class="ln" style="left:604px;top:202px;width:14px;"></div>
<div class="l g" style="left:623px;top:192px;height:14px;">Shading</div><div class="ln" style="left:666px;top:202px;width:51px;"></div>
<div class="l g" style="left:721px;top:192px;height:14px;">Texture</div><div class="ln" style="left:759px;top:202px;width:120px;"></div>
<div class="l g" style="left:883px;top:192px;height:14px;">Center</div><div class="ln" style="left:918px;top:202px;width:27px;"></div>
<div class="l g" style="left:949px;top:192px;height:14px;">Options</div><div class="ln" style="left:990px;top:202px;width:85px;"></div>
<svg style="left:589px;top:210px;" width="26" height="26" viewBox="0 0 26 26"><path d="M1 8.500V2H8M18 2H25V8.500M25 18.500V25H18M8 25H1V18.500" fill="none" stroke="#b4b4b4" stroke-width="2"/><rect x="6" y="8.500" width="14" height="10" fill="#aeaeae"/></svg>
<svg style="left:623px;top:210px;" width="26" height="26" viewBox="0 0 26 26"><circle cx="13" cy="13" r="12.2" fill="#a2a2a2"/></svg>
<svg style="left:655px;top:210px;" width="26" height="26" viewBox="0 0 26 26"><g fill="none" stroke="#b0b0b0" stroke-width=".9"><circle cx="13" cy="13" r="12"/><ellipse cx="13" cy="13" rx="6" ry="12"/><path d="M13 1V25M1.500 10Q13 14 24.500 10M2.500 17.500Q13 22 23.500 17.500M4 5.500Q13 9 22 5.500"/></g></svg>
<div class="a" style="left:684px;top:207px;width:32px;height:32px;background:#262626;"></div>
<svg style="left:687px;top:210px;" width="26" height="26" viewBox="0 0 26 26"><circle cx="13" cy="13" r="12" fill="#8e8e8e"/><g fill="none" stroke="#c0c0c0" stroke-width=".9"><circle cx="13" cy="13" r="12"/><ellipse cx="13" cy="13" rx="6" ry="12"/><path d="M13 1V25M1.500 10Q13 14 24.500 10M2.500 17.500Q13 22 23.500 17.500M4 5.500Q13 9 22 5.500"/></g></svg>
<div class="a" style="left:718px;top:207px;width:32px;height:32px;background:#262626;"></div>
<svg style="left:721px;top:210px;" width="26" height="26" viewBox="0 0 26 26"><circle cx="13" cy="13" r="12.2" fill="#a2a2a2"/></svg>
<svg style="left:753px;top:210px;" width="26" height="26" viewBox="0 0 26 26"><clipPath id="ckb"><circle cx="13" cy="13" r="12.2"/></clipPath><g clip-path="url(#ckb)"><rect width="26" height="26" fill="#5a5a5a"/><path d="M1 1h5v5h-5zM11 1h5v5h-5zM21 1h5v5h-5zM6 6h5v5h-5zM16 6h5v5h-5zM1 11h5v5h-5zM11 11h5v5h-5zM21 11h5v5h-5zM6 16h5v5h-5zM16 16h5v5h-5zM1 21h5v5h-5zM11 21h5v5h-5zM21 21h5v5h-5z" fill="#b6b6b6"/></g></svg>
<svg style="left:785px;top:210px;" width="26" height="26" viewBox="0 0 26 26"><clipPath id="cdb"><circle cx="13" cy="13" r="12.2"/></clipPath><g clip-path="url(#cdb)"><rect width="26" height="26" fill="#707070"/><path d="M1 1h5v5h-5zM11 1h5v5h-5zM21 1h5v5h-5zM6 6h5v5h-5zM16 6h5v5h-5zM1 11h5v5h-5zM11 11h5v5h-5zM21 11h5v5h-5zM6 16h5v5h-5zM16 16h5v5h-5zM1 21h5v5h-5zM11 21h5v5h-5zM21 21h5v5h-5z" fill="#888"/></g></svg>
<svg style="left:817px;top:210px;" width="26" height="26" viewBox="0 0 26 26"><clipPath id="m1b"><circle cx="13" cy="13" r="12.2"/></clipPath><g clip-path="url(#m1b)"><rect width="26" height="26" fill="#7c7c7c"/><path d="M0 26 9 10 16 22 19 17 26 26Z" fill="#b4b4b4"/><path d="M12 26 19 15 27 26Z" fill="#9a9a9a"/><circle cx="17" cy="7" r="3" fill="#fff"/></g></svg>
<svg style="left:849px;top:210px;" width="26" height="26" viewBox="0 0 26 26"><clipPath id="m2b"><circle cx="13" cy="13" r="12.2"/></clipPath><g clip-path="url(#m2b)"><rect width="26" height="26" fill="#5e5e5e"/><path d="M0 8 26 20V26H0Z" fill="#808080"/><path d="M0 26 9 11 16 22 19 17 26 26Z" fill="#a8a8a8"/><circle cx="17" cy="7" r="3" fill="#b8b8b8"/></g></svg>
<svg style="left:883px;top:210px;" width="26" height="26" viewBox="0 0 26 26"><g stroke="#ff5f0a" stroke-width="1.4" fill="#ff5f0a"><path d="M13 0V9M13 26V17M0 13H9M26 13H17" fill="none"/><path d="M13 10.500 10 6H16ZM13 15.500 10 20H16ZM10.500 13 6 10V16ZM15.500 13 20 10V16Z" stroke="none"/></g><rect x="11" y="11" width="4" height="4" fill="#b0b0b0"/></svg>
<svg style="left:915px;top:210px;" width="26" height="26" viewBox="0 0 26 26"><g stroke="#ff5f0a" stroke-width="1.3" fill="#ff5f0a"><path d="M13 0V5M13 26V21M0 13H5M26 13H21" fill="none"/><path d="M13 7 10.500 3H15.500ZM13 19 10.500 23H15.500ZM7 13 3 10.500V15.500ZM19 13 23 10.500V15.500Z" stroke="none"/></g><g fill="none" stroke="#b0b0b0" stroke-width=".8"><circle cx="13" cy="13" r="5.500"/><ellipse cx="13" cy="13" rx="2.600" ry="5.500"/><path d="M7.500 13H18.500M8.500 10.500H17.500M8.500 15.500H17.500"/></g></svg>
<svg style="left:949px;top:210px;" width="26" height="26" viewBox="0 0 26 26"><path d="M9.500 12h7v9a3.500 3.500 0 0 1-7 0z" fill="#b8b8b8"/><circle cx="13" cy="8.500" r="6.500" fill="#fff"/><circle cx="15.500" cy="11" r="4" fill="#c4c4c4" opacity=".0"/></svg>
<svg style="left:981px;top:210px;" width="26" height="26" viewBox="0 0 26 26"><path d="M24 12A9.500 9.500 0 0 0 15.500 3" fill="none" stroke="#5fdcee" stroke-width="2.200"/><path d="M16.500 .5 12 3.200 16.500 6Z" fill="#5fdcee"/><path d="M2 14.500A9.500 9.500 0 0 0 10.500 23.200" fill="none" stroke="#5fdcee" stroke-width="2.200"/><path d="M9.500 20.500 14 23.300 9.500 26Z" fill="#5fdcee"/><path d="M10.700 12V10.300a2.400 2.400 0 0 1 4.800 0V12" fill="none" stroke="#9a9a9a" stroke-width="1.400"/><rect x="8" y="12" width="10.200" height="6" fill="#ff5f0a"/></svg>
<svg style="left:1013px;top:210px;" width="26" height="26" viewBox="0 0 26 26"><rect x="4" y="4" width="18" height="18" fill="#8c8c8c"/><path d="M7 5h3v3h-3zM12 5h3v3h-3zM17 5h3v3h-3zM7 10h3v3h-3zM12 10h3v3h-3zM17 10h3v3h-3zM7 15h3v3h-3zM12 15h3v3h-3zM17 15h3v3h-3z" fill="#e0e0e0"/></svg>
<div class="a" style="left:1042px;top:207px;width:32px;height:32px;background:#262626;"></div>
<svg style="left:1045px;top:210px;" width="26" height="26" viewBox="0 0 26 26"><circle cx="13" cy="13" r="12" fill="#a2a2a2" stroke="#ff5f0a" stroke-width="1.300"/></svg>
<div class="a" style="left:1076px;top:220px;width:4px;height:8px;overflow:hidden;"><div style="width:7px;height:7px;border:1.500px solid #ff5f0a;border-radius:50%;"></div></div>
<svg style="left:0;top:0;" width="1440" height="949" viewBox="0 0 1440 949"><clipPath id="uvclip"><rect x="584" y="243" width="495" height="510"/></clipPath><g clip-path="url(#uvclip)">
<path d="M629.5 243V753M718.9 243V753M808.2 243V753M897.5 243V753M986.9 243V753M1076.2 243V753M584 325.8H1079M584 415.1H1079M584 504.3H1079M584 593.5H1079M584 682.8H1079" stroke="#464646" stroke-width="1.300" fill="none"/>
<path d="M584 245.5h4M584 254.4h4M584 263.3h4M584 272.2h4M584 281.2h9M584 290.1h4M584 299.0h4M584 307.9h4M584 316.9h4M584 325.8h19M584 334.7h4M584 343.7h4M584 352.6h4M584 361.5h4M584 370.4h9M584 379.4h4M584 388.3h4M584 397.2h4M584 406.1h4M584 415.1h19M584 424.0h4M584 432.9h4M584 441.8h4M584 450.8h4M584 459.7h9M584 468.6h4M584 477.5h4M584 486.5h4M584 495.4h4M584 504.3h19M584 513.2h4M584 522.2h4M584 531.1h4M584 540.0h4M584 548.9h9M584 557.9h4M584 566.8h4M584 575.7h4M584 584.6h4M584 593.5h19M584 602.5h4M584 611.4h4M584 620.3h4M584 629.2h4M584 638.2h9M584 647.1h4M584 656.0h4M584 665.0h4M584 673.9h4M584 682.8h19M584 691.7h4M584 700.7h4M584 709.6h4M584 718.5h4M584 727.4h9M584 736.4h4M584 745.3h4M593.8 753v-4M602.7 753v-4M611.6 753v-4M620.6 753v-4M629.5 753v-19M638.4 753v-4M647.4 753v-4M656.3 753v-4M665.2 753v-4M674.2 753v-9M683.1 753v-4M692.0 753v-4M701.0 753v-4M709.9 753v-4M718.9 753v-19M727.8 753v-4M736.7 753v-4M745.7 753v-4M754.6 753v-4M763.5 753v-9M772.5 753v-4M781.4 753v-4M790.3 753v-4M799.3 753v-4M808.2 753v-19M817.1 753v-4M826.1 753v-4M835.0 753v-4M843.9 753v-4M852.9 753v-9M861.8 753v-4M870.7 753v-4M879.7 753v-4M888.6 753v-4M897.5 753v-19M906.5 753v-4M915.4 753v-4M924.4 753v-4M933.3 753v-4M942.2 753v-9M951.2 753v-4M960.1 753v-4M969.0 753v-4M978.0 753v-4M986.9 753v-19M995.8 753v-4M1004.8 753v-4M1013.7 753v-4M1022.6 753v-4M1031.6 753v-9M1040.5 753v-4M1049.4 753v-4M1058.4 753v-4M1067.3 753v-4M1076.2 753v-19" stroke="#5a5a5a" stroke-width="1" fill="none"/>
<circle cx="988.7" cy="288.0" r="25.4" fill="#363636"/>
<path d="M955.3 290.8L969.6 312.4L1003.1 308.8L1015.1 290.8Z" fill="#363636" stroke="none" stroke-width="1" />
<circle cx="1040.2" cy="381.7" r="10.8" fill="#343434"/>
<path d="M752 398.5L773.5 386.5L780.7 396.1L766.3 408Z" fill="#363636" stroke="none" stroke-width="1" />
<path d="M862 314.8C862 307.6 869.2 301.6 883.5 299.2L931.3 297.5L979.2 302.8L1035.4 320.7L1025.8 332.7L1005.5 339.9C986.4 345.8 974.4 355.4 972 367.4L970.8 380.5L884.7 380.5C883.5 362.6 871.5 345.8 847.6 344.7C835.7 344.7 830.9 343.5 827.3 338.7L823.7 325.5L862 323.1Z" fill="url(#mD)" stroke="none" stroke-width="1" />
<path d="M823.7 325.5L1000.7 319.5L1001.9 325.5L1035.4 320.7" fill="none" stroke="#ff6a0a" stroke-width="1" />
<path d="M862 323.1C860.8 312.4 869.2 301.6 883.5 299.2L931.3 297.5L979.2 302.8L1035.4 320.7L1025.8 332.7L1005.5 339.9C986.4 345.8 974.4 355.4 972 367.4L970.8 380.5" fill="none" stroke="#ff6a0a" stroke-width="1" />
<path d="M815.3 325.5L883.5 299.2M815.3 325.5L823.7 325.5M931.3 320.7C934.9 338.7 933.7 357.8 927.8 380.5M930.1 298L930.1 320.7M937.3 299.2L936.6 320.7M1000.7 319.5L1001.9 335.1" fill="none" stroke="#ff6a0a" stroke-width="1" />
<ellipse cx="902.6" cy="302.8" rx="6.7" ry="10.0" fill="#363636" transform="rotate(25 902.6 302.8)"/>
<ellipse cx="972.0" cy="338.7" rx="3.8" ry="9.6" fill="#363636" transform="rotate(-15 972.0 338.7)"/>
<path d="M984 350.6L997.1 348.2L995.9 362.6L981.6 372.2Z" fill="#303030" stroke="none" stroke-width="1" />
<path d="M791.4 341.1L804.6 335.1L805.8 345.8L816.5 360.2L811.8 376.9L810.6 396.1L791.4 378.1Z" fill="url(#mS)" stroke="none" stroke-width="1" />
<path d="M804.6 335.1L805.8 345.8L816.5 360.2M798.6 384.1C797.4 376.9 802.2 372.2 811.8 371" fill="none" stroke="#ff6a0a" stroke-width="1" />
<path d="M811.8 396.1C810.6 367.4 828.5 344.7 847.6 344.7C871.5 345.8 885.9 367.4 884.7 396.1Z" fill="url(#mS)" stroke="#ff6a0a" stroke-width="1" />
<ellipse cx="826.6" cy="351.1" rx="11.0" ry="8.1" fill="#363636"/>
<path d="M844.3 350.6L851.5 350.6L849.1 376L845.2 376Z" fill="#363636" stroke="none" stroke-width="1" />
<path d="M822.5 355.4C828.5 348.2 835.7 345.4 847.6 344.7" fill="none" stroke="#ff6a0a" stroke-width="1" />
<path d="M743.6 373.4C744.8 367.4 775.9 367.4 779.5 373.4C778.3 381.7 771.1 386.5 763.9 387.7C752 384.1 744.8 380.5 743.6 373.4Z" fill="url(#mXX)" stroke="#ff6a0a" stroke-width="1" stroke-dasharray="6 2"/>
<path d="M763.9 387.7L775.9 380.5L778.3 396.1L771.1 408" fill="none" stroke="#ff6a0a" stroke-width="1" />
<path d="M884.7 380.5L970.8 380.5L991.1 393.7L884.7 393.7Z" fill="url(#mS)" stroke="none" stroke-width="1" />
<path d="M884.7 380.5L884.7 393.7L991.1 393.7M970.8 380.5L991.1 393.2M884.7 380.5L970.8 380.5" fill="none" stroke="#ff6a0a" stroke-width="1" />
<path d="M780.7 399.7L1079.6 394.2L1079.6 408L780.7 408.5Z" fill="url(#mH)" stroke="none" stroke-width="1" />
<path d="M780.7 399.7L811.8 397.3L1079.6 394.2M780.7 408.5L1079.6 407.6" fill="none" stroke="#ff6a0a" stroke-width="1" />
<path d="M779.5 408.5L885.9 408.5L885.9 427.2L840.5 428.4L779.5 430Z" fill="url(#mS)" stroke="none" stroke-width="1" />
<path d="M779.5 408.5L779.5 430L798.6 430.8M798.6 410.4L798.6 432M805.8 410.4L804.6 436.7M834.5 428.4L862 428.4" fill="none" stroke="#ff6a0a" stroke-width="1" />
<path d="M866.8 414L979.2 413.3L979.2 422.4L885.9 422.4L885.9 420L866.8 418.8Z" fill="#333" stroke="none" stroke-width="1" />
<path d="M887.1 422.4L976.8 422.4M917 428.4L968.4 428.4" fill="none" stroke="#ff6a0a" stroke-width="1" />
<path d="M811.8 434.3L833.3 441.5M812.9 442.7L832.1 433.1M822.5 429.6L823.7 446.3M815.3 432L830.9 445.1M816.5 443.9L829.7 432" fill="none" stroke="#ff6a0a" stroke-width="1" />
<path d="M766.3 408L775.9 403.2M768.7 410.4L778.3 408" fill="none" stroke="#ff6a0a" stroke-width="1.2" />
<path d="M973.9 409.9L1003.1 408.5L1003.1 434.3L979.2 441.5L969.6 432L976.8 424.8Z" fill="url(#mXX)" stroke="none" stroke-width="1" />
<path d="M1003.1 408.5L1032.3 408L1032.3 421.9L1003.1 422.9Z" fill="url(#mS)" stroke="none" stroke-width="1" />
<path d="M1032.3 408L1079.6 407.6L1079.6 420L1071.3 427.2L1062.9 449.2L1041.4 451.6L1032.3 441.5L1032.3 421.9Z" fill="url(#mXX)" stroke="none" stroke-width="1" />
<path d="M932.1 454L938.5 446.3L969.6 432L979.2 441.5L1003.1 434.3L1003.1 451.1L997.1 454L933.7 458.3Z" fill="url(#mX)" stroke="none" stroke-width="1" />
<path d="M1003.1 451.1L1005.5 441.5L1032.3 441.5L1041.4 451.6L1034.2 455.9L1016.2 453.5L1015.1 458.3L999.5 458.3Z" fill="url(#mX)" stroke="none" stroke-width="1" />
<path d="M933.7 458.3L997.1 453.5M1034.2 455.9L1066.5 449.9M943.3 453.5L979.2 451.1M1079.6 418.8L1071.3 427.2M1003.1 422.9L1032.3 421.9M1015.1 458.3L1015.1 453.5L1034.2 455.9M1062.9 449.2L1071.3 427.2" fill="none" stroke="#ff6a0a" stroke-width="1" />
<path d="M1072.5 408L1079.6 407.6L1079.6 420L1071.3 427.2Z" fill="url(#mS)" stroke="none" stroke-width="1" />
<path d="M1066.5 394.2C1066.5 376.9 1072.5 365 1079.6 360.2L1079.6 394.2Z" fill="url(#mX)" stroke="none" stroke-width="1" />
<path d="M1078.4 394.2C1078.4 381.7 1079.6 367.4 1080.8 360.2" fill="none" stroke="#ff6a0a" stroke-width="1" />
<path d="M809.4 298C795 290.8 790.2 278.9 793.8 269.3C799.8 257.4 821.3 247.8 845.2 241.8M993.5 241.8C1010.3 245.4 1023.4 250.2 1027 256.2C1028.2 264.5 1019.8 274.1 1011.5 278.9M818.9 298.5C835.7 281.3 864.4 271.2 893.1 269.8C912.2 268.8 926.6 271.2 945.7 278.9L956.5 286.1M809.4 298L818.9 298.7L894.3 296.8M816.5 258.1L919.4 253.8L987.5 252.1M852.4 241.8C852.4 252.6 854.8 264.5 857.7 271.7M909.8 269.8L907.4 288.4M915.8 270.5L912.7 294.4M970.8 241.8L952.9 269.8L963.6 275.3M921.8 241.8L921.8 252.6M927.8 241.8L927.8 252.6M893.1 296.8C931.3 294.4 967.2 302.8 981.6 305.2" fill="none" stroke="#ff6a0a" stroke-width="1" />
<path d="M970.8 241.8L988.7 247.8M974.4 278.9C981.6 271.7 998.3 271.7 1003.1 281.3M976.8 288.4C981.6 281.3 993.5 281.3 998.3 289.6M979.2 298C984 294.4 991.1 294.4 994.7 299.2" fill="none" stroke="#ff6a0a" stroke-width="0.9" stroke-dasharray="2 2"/>
<path d="M788.9 600.6L790.6 593.3L795.6 586.7L806.7 583.3L818.9 581.7L836.7 573.9L847.8 572L865.6 574.4L881.1 580L891.1 581.7L893.9 593.3L892.8 598.3L886.7 601.1L880.6 602.8L879.4 596.1Q873.3 591.1 866.7 596.1L864.4 603.9L818.3 603.9L816.1 597.2Q810 591.1 803.3 595.6L801.7 603.9L793.9 603.9Z" fill="#343434" stroke="none" stroke-width="1" />
<path d="M820 582.2L833.9 575.6M832.2 581.3L851.7 580.6M851.7 578.3V583.9M855 580.6L864.4 580.6M867.2 575.6L881.1 580" fill="none" stroke="#ff6a0a" stroke-width="0.9" stroke-dasharray="5 3"/>
<path d="M823.3 593.3H865.6M823.3 596.7H847.8M838.9 599.4H857.8" fill="none" stroke="#8a8f85" stroke-width="0.7" stroke-dasharray="1 5"/>
<text x="593" y="324.3" font-size="10.800" fill="#6a6a6a" font-family="Liberation Sans,sans-serif">0.6</text><text x="593" y="413.6" font-size="10.800" fill="#6a6a6a" font-family="Liberation Sans,sans-serif">0.5</text><text x="593" y="502.8" font-size="10.800" fill="#6a6a6a" font-family="Liberation Sans,sans-serif">0.4</text><text x="593" y="592.0" font-size="10.800" fill="#6a6a6a" font-family="Liberation Sans,sans-serif">0.3</text><text x="593" y="681.3" font-size="10.800" fill="#6a6a6a" font-family="Liberation Sans,sans-serif">0.2</text><text x="631.5" y="746" font-size="10.800" fill="#6a6a6a" font-family="Liberation Sans,sans-serif">0.2</text><text x="720.9" y="746" font-size="10.800" fill="#6a6a6a" font-family="Liberation Sans,sans-serif">0.3</text><text x="810.2" y="746" font-size="10.800" fill="#6a6a6a" font-family="Liberation Sans,sans-serif">0.4</text><text x="899.5" y="746" font-size="10.800" fill="#6a6a6a" font-family="Liberation Sans,sans-serif">0.5</text><text x="988.9" y="746" font-size="10.800" fill="#6a6a6a" font-family="Liberation Sans,sans-serif">0.6</text><text x="1078.2" y="746" font-size="10.800" fill="#6a6a6a" font-family="Liberation Sans,sans-serif">0.7</text>
<path d="M613 725V701" stroke="#4cf04c" stroke-width="1.500"/><path d="M613 693l-3 9h6z" fill="#4cf04c"/><path d="M613 725H634" stroke="#f05050" stroke-width="1.500"/><path d="M641 725l-8-2.500v5z" fill="#f05050"/><path d="M613 722l3 3-3 3-3-3z" fill="#3030ff"/>
<text x="612" y="689" font-size="12" fill="#4cf04c" font-family="Liberation Sans,sans-serif">v</text><text x="647" y="723" font-size="12" fill="#f05050" font-family="Liberation Sans,sans-serif">u</text><text x="616" y="723" font-size="9" fill="#3a3aff" font-family="Liberation Sans,sans-serif">w</text>
</g></svg>
<!--VIEWUV-->

<!-- ===== TRANSFORM ===== -->
<div class="a hdr" style="left:583px;top:762px;width:479px;height:22px;padding-left:4px;">Transform</div>
<div class="c q" style="left:1062px;top:762px;width:16px;height:22px;">?</div>
<div class="a body" style="left:583px;top:784px;width:495px;height:57px;"></div>
<div class="c b" style="left:588px;top:789px;width:40px;height:23px;">Local</div>
<div class="c d" style="left:588px;top:813px;width:40px;height:24px;">World</div>
<div class="c d" style="left:634px;top:789px;width:45px;height:23px;">Center</div>
<div class="c b" style="left:634px;top:813px;width:45px;height:24px;">Multi</div>
<div class="c b" style="left:680px;top:789px;width:46px;height:23px;">Mouse</div>
<div class="c b" style="left:680px;top:813px;width:46px;height:24px;">User</div>
<div class="c d" style="left:732px;top:789px;width:23px;height:23px;">Tu</div>
<div class="l b" style="left:755px;top:789px;width:97px;height:23px;padding-left:4px;">0</div>
<div class="sp" style="left:840px;top:791px;"></div>
<div class="c d" style="left:732px;top:813px;width:23px;height:24px;">Tv</div>
<div class="l b" style="left:755px;top:813px;width:97px;height:24px;padding-left:4px;">0</div>
<div class="sp" style="left:840px;top:816px;"></div>
<div class="c d" style="left:859px;top:789px;width:23px;height:23px;">Su</div>
<div class="l b" style="left:882px;top:789px;width:97px;height:23px;padding-left:4px;">0</div>
<div class="sp" style="left:967px;top:791px;"></div>
<div class="c d" style="left:859px;top:813px;width:23px;height:24px;">Sv</div>
<div class="l b" style="left:882px;top:813px;width:97px;height:24px;padding-left:4px;">0</div>
<div class="sp" style="left:967px;top:816px;"></div>
<div class="c" style="left:984px;top:789px;width:23px;height:23px;">Rw</div>
<div class="c" style="left:984px;top:813px;width:23px;height:24px;">In</div>
<div class="a b" style="left:1011px;top:789px;width:62px;height:48px;"></div>
<div class="c" style="left:1011px;top:789px;width:31px;height:23px;">+90</div>
<div class="c" style="left:1042px;top:789px;width:31px;height:23px;">-90</div>
<div class="c" style="left:1011px;top:813px;width:62px;height:24px;">180</div>
<!-- bottom vertical tabs -->
<div class="a" style="left:583px;top:842px;width:23px;height:23px;background:#1e1e1e;overflow:hidden;"><div style="position:absolute;left:20px;top:3px;transform-origin:0 0;transform:rotate(90deg);font-weight:bold;font-size:13.6px;line-height:23px;height:23px;white-space:nowrap;color:#dedede;">Grid</div></div>
<div class="a" style="left:614px;top:842px;width:23px;height:23px;background:#1e1e1e;overflow:hidden;"><div style="position:absolute;left:20px;top:3px;transform-origin:0 0;transform:rotate(90deg);font-weight:bold;font-size:13.6px;line-height:23px;height:23px;white-space:nowrap;color:#dedede;">UV Tile</div></div>
<div class="a" style="left:646px;top:842px;width:23px;height:23px;background:#1e1e1e;overflow:hidden;"><div style="position:absolute;left:20px;top:3px;transform-origin:0 0;transform:rotate(90deg);font-weight:bold;font-size:13.6px;line-height:23px;height:23px;white-space:nowrap;color:#dedede;">Multi</div></div>
<!--TRANSFORM-->

<!-- ===== RIGHT PANEL ===== -->
<div class="a" style="left:1085px;top:189px;width:355px;height:676px;background:#2a2a2a;"></div>
<div class="a" style="left:1430px;top:189px;width:10px;height:441px;background:#3c3c3c;"></div>
<div class="a hdr" style="left:1085px;top:189px;width:340px;height:23px;padding-left:4px;">Select</div>
<div class="a hdr" style="left:1085px;top:217px;width:340px;height:23px;padding-left:4px;">Align | Straighten | Flip | Fit | Stack</div>
<div class="a hdr" style="left:1085px;top:245px;width:340px;height:23px;padding-left:4px;">Edge Loop Parameters</div>
<div class="a hdr" style="left:1085px;top:273px;width:340px;height:23px;padding-left:4px;">Auto Seams | Full AUTO UVs</div>
<div class="a body" style="left:1085px;top:301px;width:340px;height:192px;background:#444;"></div>
<div class="a hdr" style="left:1085px;top:301px;width:324px;height:23px;padding-left:4px;">UV Channel (UVChannel_1)</div>
<div class="l g" style="left:1091px;top:327px;height:14px;">Current</div><div class="ln" style="left:1131px;top:337px;width:292px;"></div>
<div class="c" style="left:1149px;top:345px;width:160px;height:23px;font-weight:bold;font-size:13.6px;color:#d8d8d8;">UVChannel_1</div>
<div class="c u" style="left:1368px;top:345px;width:52px;height:22px;background:#4a4a4a;">Rename</div>
<div class="l g" style="left:1091px;top:371px;height:14px;">UV Sets</div><div class="ln" style="left:1133px;top:381px;width:290px;"></div>
<div class="a" style="left:1090px;top:388px;width:258px;height:100px;background:#232323;"></div>
<div class="l" style="left:1093px;top:389px;height:15px;color:#e8e8e8;font-size:11px;">UVChannel_1</div>
<!-- proportional -->
<div class="a body" style="left:1085px;top:498px;width:340px;height:115px;background:#444;"></div>
<div class="a hdr" style="left:1085px;top:498px;width:279px;height:23px;padding-left:4px;">Proportional</div>
<div class="c" style="left:1364px;top:498px;width:44px;height:23px;">enable</div><div class="c" style="left:1408px;top:498px;width:17px;height:23px;font-size:11px;">?</div>
<div class="l g" style="left:1093px;top:526px;height:22px;">Falloff</div>
<div class="a hat" style="left:1249px;top:526px;width:153px;height:22px;background-color:#484848;"></div>
<div class="c dis" style="left:1324px;top:527px;width:30px;height:22px;color:#b4b4b4;">0.5</div>
<div class="sp x" style="left:1386px;top:528px;"></div>
<div class="c hatd" style="left:1403px;top:526px;width:17px;height:22px;">S</div>
<div class="l g" style="left:1092px;top:551px;height:22px;">Falloff Profile</div>
<div class="a hat" style="left:1241px;top:551px;width:179px;height:23px;background-color:#434343;"></div>
<div class="c dis" style="left:1241px;top:551px;width:30px;height:23px;">Con</div>
<div class="c dis" style="left:1270px;top:551px;width:30px;height:23px;">Lin</div>
<div class="c dis" style="left:1297px;top:551px;width:30px;height:23px;">Sha</div>
<div class="c dis" style="left:1327px;top:551px;width:30px;height:23px;">Roo</div>
<div class="c dis" style="left:1357px;top:551px;width:30px;height:23px;">Spe</div>
<div class="c hatd" style="left:1387px;top:551px;width:33px;height:23px;padding-top:2px;">Smo</div>
<div class="l g" style="left:1092px;top:581px;height:22px;">Pin Map Enable</div>
<div class="a hatd" style="left:1388px;top:576px;width:32px;height:32px;"></div>
<svg style="left:1388px;top:576px;-webkit-mask-image:conic-gradient(#000 25%,transparent 0 50%,#000 0 75%,transparent 0);-webkit-mask-size:2px 2px;mask-image:conic-gradient(#000 25%,transparent 0 50%,#000 0 75%,transparent 0);mask-size:2px 2px;" width="32" height="32" viewBox="0 0 32 32"><circle cx="16" cy="10" r="3.800" fill="#ff5f0a"/><path d="M16 13V27" stroke="#ff5f0a" stroke-width="1.600"/></svg>
<!-- real time optimize -->
<div class="a body" style="left:1085px;top:618px;width:340px;height:50px;background:#444;"></div>
<div class="a hdr" style="left:1085px;top:618px;width:279px;height:23px;padding-left:4px;">Real Time Optimize</div>
<div class="c" style="left:1364px;top:618px;width:44px;height:23px;">enable</div><div class="c" style="left:1408px;top:618px;width:17px;height:23px;font-size:11px;">?</div>
<div class="l g" style="left:1090px;top:643px;height:22px;">Iterations</div>
<div class="a hat" style="left:1201px;top:643px;width:174px;height:22px;background-color:#484848;"></div>
<div class="c dis" style="left:1295px;top:644px;width:20px;height:22px;color:#b4b4b4;">1</div>
<div class="sp x" style="left:1358px;top:645px;"></div>
<div class="c dis" style="left:1376px;top:643px;width:44px;height:22px;">Restart</div>
<!-- help -->
<div class="a body" style="left:1085px;top:673px;width:340px;height:192px;background:#444;overflow:hidden;">
 <div class="l" style="left:7px;top:186px;height:15px;">RMB-Alt</div><div class="l" style="left:105px;top:186px;height:15px;">ZOOM</div>
</div>
<div class="a hdr" style="left:1085px;top:673px;width:340px;height:23px;padding-left:4px;">Help Select (Edges)</div>
<div class="l g" style="left:1091px;top:699px;height:14px;">Tip(s)</div><div class="ln" style="left:1121px;top:709px;width:302px;"></div>
<div class="l" style="left:1092px;top:716px;height:15px;width:327px;overflow:hidden;font-size:11.8px;">Select some edges then hit key 'C' for cut and 'W' for weld/uncut</div>
<div class="l g" style="left:1091px;top:800px;height:14px;">Mouse Interaction</div><div class="ln" style="left:1184px;top:810px;width:239px;"></div>
<div class="c" style="left:1090px;top:817px;width:330px;height:23px;background:#3e3e3e;">Configure Interaction...</div>
<div class="l" style="left:1092px;top:842px;height:15px;">LMB-Alt</div><div class="l" style="left:1190px;top:842px;height:15px;">ORBIT</div>
<!--RIGHT-->

<!-- ===== STATUS BAR ===== -->
<div class="a" style="left:0;top:865px;width:1440px;height:5px;background:#202020;"></div>
<div class="a body" style="left:0;top:870px;width:1440px;height:50px;background:#3c3c3c;"></div>
<div class="a" style="left:12px;top:888px;width:14px;height:14px;background:#ff5a00;"></div>
<div class="a" style="left:35px;top:873px;width:230px;height:44px;background:#232323;"></div>
<div class="l" style="left:37px;top:875px;height:15px;font-size:10.8px;">EDGES</div>
<div class="l" style="left:37px;top:899px;height:15px;font-size:12px;">Selected: 0 | Hidden: 0 | Total: 586329</div>
<div class="c b" style="left:278px;top:872px;width:26px;height:45px;background:#444;">Off</div>
<div class="c b" style="left:306px;top:872px;width:43px;height:23px;background:#444;">Topo</div>
<div class="c d" style="left:349px;top:872px;width:49px;height:23px;">Stretch</div>
<div class="c b" style="left:306px;top:895px;width:43px;height:22px;background:#444;">Mat ID</div>
<div class="c b" style="left:349px;top:895px;width:49px;height:22px;background:#444;">Texel D</div>
<div class="a" style="left:425px;top:872px;width:816px;height:21px;background:linear-gradient(90deg,#d0210c 0,#cc3426 18%,#c0524a 36%,#a8827a 48%,#9a9488 52%,#7c96a6 60%,#4a88c4 75%,#1c76d6 90%,#1a72d4 100%);"></div>
<div class="c" style="left:791px;top:872px;width:80px;height:21px;color:#d4d4d4;">Stretch</div>
<svg style="left:0;top:0;" width="1440" height="949" viewBox="0 0 1440 949"><path d="M425.500 893v3M515.700 893v3M606.300 893v3M697 893v3M787.700 893v3" stroke="#d0301c" stroke-width="1"/><path d="M878.300 893v3M969 893v3M1059.700 893v3M1150.300 893v3M1240.500 893v3" stroke="#3a80c8" stroke-width="1"/></svg>
<div class="c" style="left:417px;top:895px;width:20px;height:15px;">0</div>
<div class="c" style="left:486px;top:895px;width:60px;height:15px;">0.2222</div>
<div class="c" style="left:576px;top:895px;width:60px;height:15px;">0.4444</div>
<div class="c" style="left:667px;top:895px;width:60px;height:15px;">0.6667</div>
<div class="c" style="left:758px;top:895px;width:60px;height:15px;">0.8889</div>
<div class="c" style="left:849px;top:895px;width:60px;height:15px;">1.111</div>
<div class="c" style="left:939px;top:895px;width:60px;height:15px;">1.333</div>
<div class="c" style="left:1030px;top:895px;width:60px;height:15px;">1.556</div>
<div class="c" style="left:1120px;top:895px;width:60px;height:15px;">1.778</div>
<div class="c" style="left:1231px;top:895px;width:20px;height:15px;">2</div>
<div class="l g" style="left:1261px;top:873px;height:14px;">Support</div><div class="ln" style="left:1303px;top:883px;width:130px;"></div>
<div class="c b" style="left:1258px;top:888px;width:30px;height:30px;background:#424242;">Bug</div>
<div class="c b" style="left:1290px;top:888px;width:64px;height:30px;background:#424242;">F. Request</div>
<div class="c b" style="left:1355px;top:888px;width:78px;height:30px;background:#424242;">New Release</div>
<div class="a" style="left:0;top:920px;width:1440px;height:5px;background:#1c1c1c;"></div>
<div class="a" style="left:0;top:925px;width:1440px;height:24px;background:linear-gradient(#e6e5e6,#dcdbdc);border-radius:0 0 10px 10px;"></div>
<!--STATUS-->

</div>
</body>
</html>
